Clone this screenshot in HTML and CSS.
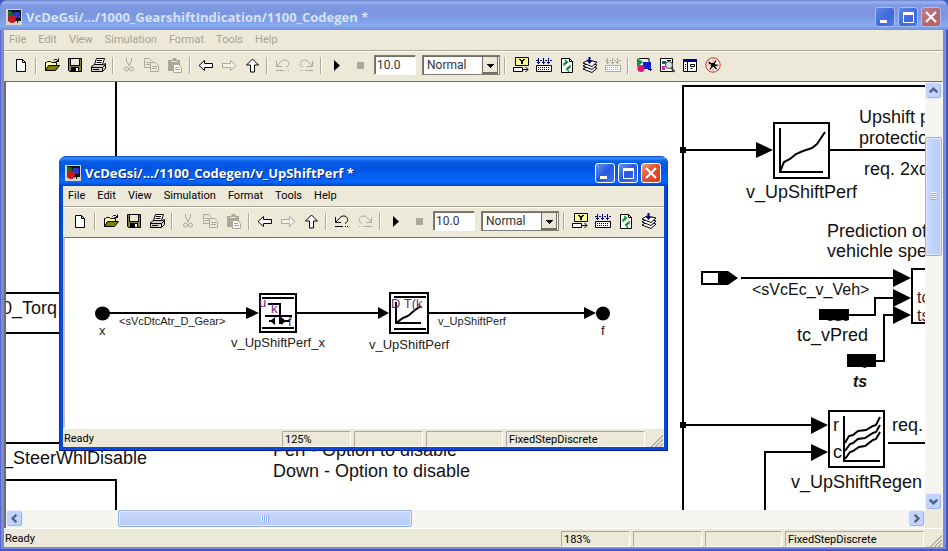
FILE: index.html
```html
<!DOCTYPE html>
<html lang="en">
<head>
<meta charset="utf-8">
<title>VcDeGsi/.../1000_GearshiftIndication/1100_Codegen *</title>
<link rel="stylesheet" href="styles.css">
</head>
<body>
<svg class="defs" aria-hidden="true">
  <defs>
    <symbol id="i-app" viewBox="0 0 16 16"><path fill="#d8d4c8" d="M0 0h16v16H0z"/><path fill="#111" d="M2 1h13v11H2z"/><path fill="#2434c8" d="M8 3h6v6H8z"/><path fill="#176a3c" d="M2 2h3l3 3-3 3H2z"/><circle cx="6" cy="10" r="4" fill="#c81824"/><path fill="#111" d="M12 9v2h2v1h-2v2h-1v-2H9v-1h2V9z"/></symbol>
    <symbol id="i-new" viewBox="0 0 16 16"><path d="M3.500 2.500h6l3 3v9h-9z" fill="#fff" stroke="#000"/><path d="M9.500 2.500v3h3" fill="none" stroke="#000"/></symbol>
    <symbol id="i-open" viewBox="0 0 16 16"><path d="M1.500 13.500v-8h1l1-1h3l1 1h5v3" fill="#ffffa0" stroke="#000"/><path d="M1.500 13.500l3-5h11l-4 5z" fill="#808000" stroke="#000"/><path d="M9.500 3.500l1-1h2l2 2M14.500 1.500v3h-3" fill="none" stroke="#000"/></symbol>
    <symbol id="i-save" viewBox="0 0 16 16"><path d="M1.500 1.500h13v13h-12l-1-1z" fill="#808040" stroke="#000"/><path d="M4 2h8v6H4z" fill="#ece9d8"/><path d="M3.500 2v6.500h9V2" fill="none" stroke="#000"/><path d="M4 10h8v5H4z"/><path d="M9 11h2v3H9z" fill="#fff"/></symbol>
    <symbol id="i-print" viewBox="0 0 16 16"><path d="M4.500 7.500l2-6h8l-2 6z" fill="#fff" stroke="#000"/><path d="M7 3.500h5M6.500 5.500h5" stroke="#000"/><path d="M1.500 9.500l3-2h9l2-1v5l-3 3h-11z" fill="#d4d0c8" stroke="#000"/><path d="M1.500 10.500h11v4M12.500 10.500l3-3M3 12.500h8" fill="none" stroke="#000"/><path d="M9 12h2v1H9z" fill="#ffe800"/></symbol>
    <symbol id="i-cut" viewBox="0 0 16 16"><g fill="none" stroke="#aca899"><path d="M5.500 1v3l3 5M10.500 1v3l-3 5"/><circle cx="5.500" cy="12" r="2"/><circle cx="10.500" cy="12" r="2"/></g></symbol>
    <symbol id="i-copy" viewBox="0 0 16 16"><g fill="#ece9d8" stroke="#aca899"><path d="M.5 1.500h5l3 3v6h-8z"/><path d="M2 5.500h4M2 7.500h4"/><path d="M6.500 5.500h5l3 3v6h-8z"/><path d="M8 9.500h5M8 11.500h5"/></g></symbol>
    <symbol id="i-paste" viewBox="0 0 16 16"><path d="M1 3h4l1-2h3l1 2h3v11H1z" fill="#aca899"/><path d="M4 4h6v1H4z" fill="#ece9d8"/><path d="M6.500 7.500h5l3 3v5h-8z" fill="#f8f6ee" stroke="#aca899"/><path d="M8 10.500h4M8 12.500h5" stroke="#aca899"/></symbol>
    <symbol id="i-left" viewBox="0 0 16 16"><path d="M1 8.500l5.500-5v3h8v4h-8v3z" fill="#fff" stroke="currentColor"/></symbol>
    <symbol id="i-right" viewBox="0 0 16 16"><path d="M15 8.500l-5.500-5v3h-8v4h8v3z" fill="#f4f2e8" stroke="#aca899"/></symbol>
    <symbol id="i-up" viewBox="0 0 16 16"><path d="M8.500 2l-6 6h4v7h4v-7h4z" fill="#fff" stroke="currentColor"/></symbol>
    <symbol id="i-undo" viewBox="0 0 16 16"><path d="M1.500 4v5.500h5.500M2 9l4-4.500c2-2 5-2 6.500-.5 2 2 1.500 5-1.500 6.500" fill="none" stroke="currentColor"/><path d="M1 13.500h8M11 13.500h1M13 13.500h1" stroke="currentColor"/></symbol>
    <symbol id="i-redo" viewBox="0 0 16 16"><path d="M14.500 4v5.500H9M14 9l-4-4.500c-2-2-5-2-6.500-.5-2 2-1.500 5 1.500 6.500" fill="none" stroke="currentColor"/><path d="M15 13.500H7M5 13.500H4M3 13.500H2" stroke="currentColor"/></symbol>
    <symbol id="i-play" viewBox="0 0 16 16"><path d="M5 3l6 5.500L5 14z"/></symbol>
    <symbol id="i-stop" viewBox="0 0 16 16"><path d="M5 5h7v7H5z" fill="#aca899"/></symbol>
    <symbol id="i-library" viewBox="0 0 16 16"><path d="M2.500.5h13v8h-13z" fill="#ffff90" stroke="#000"/><path d="M6 2h2v1h2V2h2v1h-1v1h-1v3H8V4H7V3H6z"/><path d="M.5 10.500h9v4h-9z" fill="#fff" stroke="#000"/><path d="M10 12.500h5M12.500 10l2.500 2.500-2.500 2.500" fill="none" stroke="#000"/></symbol>
    <symbol id="i-build" viewBox="0 0 16 16"><path d="M.5 8.500h15v6H.5z" fill="#fff" stroke="currentColor"/><path d="M2 10.500h12M2 12.500h12" stroke="currentColor" stroke-dasharray="1 1"/><path class="accent" d="M2.500 1v6M7.500 1v6M12.500 1v6M1 5.500h3M6 5.500h3M11 5.500h3M0 3.500h2M4 3.500h2M9 3.500h2M14 3.500h2" fill="none"/></symbol>
    <symbol id="i-refresh" viewBox="0 0 16 16"><path d="M2.500 1.500h8l3 3v11h-11z" fill="#fff" stroke="#000"/><path d="M10.500 1.500v3h3" fill="none" stroke="#000"/><path d="M5 9V6.500L7.500 5M6 3l2.500 2L6 7.500M11 8v2.500L8.500 12M10 9.500L7.500 12l2.500 2.500" fill="none" stroke="#08882c" stroke-width="1.300"/></symbol>
    <symbol id="i-stack" viewBox="0 0 16 16"><g fill="#fff" stroke="#000"><path d="M1 12l5-3 9 2-5 4.500z"/><path d="M1 9l5-3 9 2-5 4.500z"/><path d="M1 6l5-3 9 2-5 4.500z"/></g><path d="M7.500 0v4" stroke="#000080" stroke-width="2" fill="none"/><path d="M4.500 3.500h6l-3 3.500z" fill="#000080"/></symbol>
    <symbol id="i-browser" viewBox="0 0 16 16"><path d="M1 1l6 4-6 5z" fill="#089048"/><path d="M7 5h8v7H7z" fill="#1020d0"/><circle cx="5" cy="11.500" r="3.500" fill="#e01070"/><path d="M3 1.500h10V5M14.500 12v2M12 12.500h4" stroke="#000" fill="none"/></symbol>
    <symbol id="i-explorer" viewBox="0 0 16 16"><path d="M1.500 1.500h12v13h-12z" fill="#fff" stroke="#000"/><path d="M3 4h4v3H3z" fill="#0a6868"/><path d="M3 9h3v4H3z" fill="#e020c0"/><path d="M8 3.500h4" stroke="#000"/><circle cx="10" cy="8" r="3.500" fill="#d4e4e8" stroke="#444"/><path d="M12.500 11l3 4" stroke="#444" stroke-width="2"/></symbol>
    <symbol id="i-window" viewBox="0 0 16 16"><path d="M1.500 2.500h13v12h-13z" fill="#fff" stroke="#000"/><path d="M1 2h14v3H1z" fill="#000080"/><path d="M5.500 5v9M3 7.500h1M3 9.500h1M3 11.500h1M8.500 7.500h4v2h-4zM8.500 11.500h2" fill="none" stroke="#000"/></symbol>
    <symbol id="i-bug" viewBox="0 0 16 16"><circle cx="8" cy="8" r="7.200" fill="#fff4ec" stroke="#c83020"/><path d="M3 3l10 10M8 1v14M1 8h14" stroke="#e09888"/><circle cx="8" cy="8" r="2.200"/><path d="M3.500 5.500L7 7M11 3.500L9 7M12.500 8.500L9 8M5 12.500L7 9M11.500 12L9 9" stroke="#000" stroke-width="1.400"/></symbol>
    <symbol id="i-min" viewBox="0 0 18 18"><path d="M4 12h7v3H4z" fill="#fff"/></symbol>
    <symbol id="i-max" viewBox="0 0 18 18"><path d="M4 4h11v11H4zM5 7v7h9V7z" fill="#fff" fill-rule="evenodd"/></symbol>
    <symbol id="i-close" viewBox="0 0 18 18"><path d="M4 4l10 10M14 4L4 14" stroke="#fff" stroke-width="2.200"/></symbol>
    <symbol id="i-chevron" viewBox="0 0 16 16"><path d="M4 10l4-4 4 4" fill="none" stroke="#4d6185" stroke-width="2.600"/></symbol>
    <symbol id="i-grip" viewBox="0 0 14 14"><path d="M2 14L14 2M6 14l8-8M10 14l4-4" stroke="#aca899" stroke-width="1.600"/><path d="M1 14L14 1M5 14l9-9M9 14l5-5" stroke="#fff" stroke-width=".6"/></symbol>
  </defs>
</svg>

<main class="window inactive">
  <header class="titlebar">
    <svg class="app-icon"><use href="#i-app"/></svg>
    <h1>VcDeGsi/.../1000_GearshiftIndication/1100_Codegen *</h1>
    <div class="controls">
      <button aria-label="Minimize"><svg><use href="#i-min"/></svg></button>
      <button aria-label="Maximize"><svg><use href="#i-max"/></svg></button>
      <button class="close" aria-label="Close"><svg><use href="#i-close"/></svg></button>
    </div>
  </header>
  <nav class="menu">
    <button>File</button><button>Edit</button><button>View</button><button>Simulation</button><button>Format</button><button>Tools</button><button>Help</button>
  </nav>
  <div class="toolbar">
    <button aria-label="New"><svg><use href="#i-new"/></svg></button>
    <i class="sep"></i>
    <button aria-label="Open"><svg><use href="#i-open"/></svg></button>
    <button aria-label="Save"><svg><use href="#i-save"/></svg></button>
    <button aria-label="Print"><svg><use href="#i-print"/></svg></button>
    <i class="sep"></i>
    <button aria-label="Cut"><svg><use href="#i-cut"/></svg></button>
    <button aria-label="Copy"><svg><use href="#i-copy"/></svg></button>
    <button aria-label="Paste"><svg><use href="#i-paste"/></svg></button>
    <i class="sep"></i>
    <button aria-label="Back"><svg><use href="#i-left"/></svg></button>
    <button aria-label="Forward"><svg><use href="#i-right"/></svg></button>
    <button aria-label="Up"><svg><use href="#i-up"/></svg></button>
    <i class="sep"></i>
    <button class="off" aria-label="Undo"><svg><use href="#i-undo"/></svg></button>
    <button class="off" aria-label="Redo"><svg><use href="#i-redo"/></svg></button>
    <i class="sep"></i>
    <button aria-label="Start"><svg><use href="#i-play"/></svg></button>
    <button aria-label="Stop"><svg><use href="#i-stop"/></svg></button>
    <input class="stoptime" type="text" value="10.0" aria-label="Stop time">
    <select class="mode" aria-label="Mode"><option>Normal</option></select>
    <i class="sep"></i>
    <button aria-label="Library"><svg><use href="#i-library"/></svg></button>
    <button aria-label="Build"><svg><use href="#i-build"/></svg></button>
    <button aria-label="Refresh"><svg><use href="#i-refresh"/></svg></button>
    <button aria-label="Update"><svg><use href="#i-stack"/></svg></button>
    <button class="off" aria-label="Build subsystem"><svg><use href="#i-build"/></svg></button>
    <i class="sep"></i>
    <button aria-label="Library browser"><svg><use href="#i-browser"/></svg></button>
    <button aria-label="Model explorer"><svg><use href="#i-explorer"/></svg></button>
    <button aria-label="Model browser"><svg><use href="#i-window"/></svg></button>
    <button aria-label="Debug"><svg><use href="#i-bug"/></svg></button>
  </div>
  <div class="workspace scrolling">
    <svg class="canvas">
      <g transform="translate(-6 -82)">
        <g class="wire">
          <path d="M116 82v100M6 293h60M6 333h60M6 443h60M6 480h110v40"/>
          <path d="M1200 86H683v600M683 150h76M829 150h400M741 278h156M849 315h26v-17h20M876 361h8v-46h12M683 425h130M765 700V452h48M888 443h400"/>
          <path class="box" d="M774 123h55v55h-55zM829 411h55v56h-55zM912 269h200v54h-200z"/>
          <path d="M780 128v44h43M844 416v45h36"/>
          <path class="curve" d="M780 172l4-10 6-3 6-5 7-3 9-3 5-4 8-12"/>
          <path class="curve" d="M845 443l4-7 4-1 5-4 8-1 7-4 3-1 4-8M845 451l5-7 3-1 5-4 7-1 8-5 3-1 4-7M845 459l5-7 3-1 6-4 6-1 8-6 3-1 4-7"/>
          <path d="M719 272h-17v12h17"/>
        </g>
        <path d="M680 147h6v6h-6zM680 422h6v6h-6zM756 142l17 8-17 8zM893 269l18 9-18 9zM893 289l18 9-18 9zM893 306l18 9-18 9zM811 417l17 8-17 9zM811 444l17 8-17 9zM718 271h10l10 7-10 7h-10zM819 309h30v11l-3 1-3-1-5 1-4-1-4 1-3-1h-8zM847 354h29v13h-9l-2 1-3-1h-15z"/>
        <g class="label">
          <text x="859" y="123">Upshift performance</text>
          <text x="859" y="144">protection</text>
          <text x="864" y="175">req. 2xd</text>
          <text x="746" y="198">v_UpShiftPerf</text>
          <text x="827" y="237">Prediction of</text>
          <text x="827" y="257">vehichle speed</text>
          <text class="signal" x="752" y="295">&lt;sVcEc_v_Veh&gt;</text>
          <text class="port" x="917" y="303">tc</text>
          <text class="port" x="917" y="321">ts</text>
          <text x="797" y="341">tc_vPred</text>
          <text class="signal strong" x="853" y="387">ts</text>
          <text x="833" y="431">r</text>
          <text x="833" y="458">c</text>
          <text x="892" y="431">req.</text>
          <text x="791" y="488">v_UpShiftRegen</text>
          <text x="2" y="314">0_Torq</text>
          <text x="3" y="464">_SteerWhlDisable</text>
          <text x="273" y="456">Perf - Option to disable</text>
          <text x="273" y="477">Down - Option to disable</text>
        </g>
      </g>
    </svg>
    <div class="vscroll">
      <button aria-label="Scroll up"><svg><use href="#i-chevron"/></svg></button>
      <i class="before"></i><i class="thumb"></i><i class="after"></i>
      <button class="down" aria-label="Scroll down"><svg><use href="#i-chevron"/></svg></button>
    </div>
    <div class="hscroll">
      <button class="toleft" aria-label="Scroll left"><svg><use href="#i-chevron"/></svg></button>
      <i class="before"></i><i class="thumb"></i><i class="after"></i>
      <button class="toright" aria-label="Scroll right"><svg><use href="#i-chevron"/></svg></button>
    </div>
    <i class="corner"></i>
  </div>
  <footer class="status">
    <span class="state">Ready</span><span class="panel">183%</span><span class="panel"></span><span class="panel mid"></span><span class="panel wide">FixedStepDiscrete</span>
    <svg class="grip"><use href="#i-grip"/></svg>
  </footer>
</main>

<section class="window active">
  <header class="titlebar">
    <svg class="app-icon"><use href="#i-app"/></svg>
    <h2>VcDeGsi/.../1100_Codegen/v_UpShiftPerf *</h2>
    <div class="controls">
      <button aria-label="Minimize"><svg><use href="#i-min"/></svg></button>
      <button aria-label="Maximize"><svg><use href="#i-max"/></svg></button>
      <button class="close" aria-label="Close"><svg><use href="#i-close"/></svg></button>
    </div>
  </header>
  <nav class="menu">
    <button>File</button><button>Edit</button><button>View</button><button>Simulation</button><button>Format</button><button>Tools</button><button>Help</button>
  </nav>
  <div class="toolbar">
    <button aria-label="New"><svg><use href="#i-new"/></svg></button>
    <i class="sep"></i>
    <button aria-label="Open"><svg><use href="#i-open"/></svg></button>
    <button aria-label="Save"><svg><use href="#i-save"/></svg></button>
    <button aria-label="Print"><svg><use href="#i-print"/></svg></button>
    <i class="sep"></i>
    <button aria-label="Cut"><svg><use href="#i-cut"/></svg></button>
    <button aria-label="Copy"><svg><use href="#i-copy"/></svg></button>
    <button aria-label="Paste"><svg><use href="#i-paste"/></svg></button>
    <i class="sep"></i>
    <button aria-label="Back"><svg><use href="#i-left"/></svg></button>
    <button aria-label="Forward"><svg><use href="#i-right"/></svg></button>
    <button aria-label="Up"><svg><use href="#i-up"/></svg></button>
    <i class="sep"></i>
    <button aria-label="Undo"><svg><use href="#i-undo"/></svg></button>
    <button class="off" aria-label="Redo"><svg><use href="#i-redo"/></svg></button>
    <i class="sep"></i>
    <button aria-label="Start"><svg><use href="#i-play"/></svg></button>
    <button aria-label="Stop"><svg><use href="#i-stop"/></svg></button>
    <input class="stoptime" type="text" value="10.0" aria-label="Stop time">
    <select class="mode" aria-label="Mode"><option>Normal</option></select>
    <i class="sep"></i>
    <button aria-label="Library"><svg><use href="#i-library"/></svg></button>
    <button aria-label="Build"><svg><use href="#i-build"/></svg></button>
    <button aria-label="Refresh"><svg><use href="#i-refresh"/></svg></button>
    <button aria-label="Update"><svg><use href="#i-stack"/></svg></button>
  </div>
  <div class="workspace">
    <svg class="canvas">
      <g transform="translate(-65 -238)">
        <g class="wire">
          <path d="M102 313h146M297 313h83M429 313h157"/>
          <path class="box" d="M260 294h36v38h-36zM390 293h38v40h-38z"/>
          <path d="M262 298h32M262 328h32M268 304h12v20M265 316h27M269 321h6M282 321h8M394 297h32M394 329h32M396 302v21h25"/>
          <path class="curve" d="M396 323l7-5 5-2 7-6 6-4"/>
        </g>
        <ellipse cx="102.500" cy="313.500" rx="7.500" ry="7"/>
        <ellipse cx="603" cy="313.500" rx="7" ry="7"/>
        <path d="M246 307l13 6-13 6zM378 307l11 6-11 6zM584 307l12 6-12 6zM275 317l-5 4 5 4zM281 317l5 4-5 4z"/>
        <g class="label small">
          <text x="99" y="335">x</text>
          <text x="601" y="335">f</text>
          <text x="231" y="347">v_UpShiftPerf_x</text>
          <text x="369" y="349">v_UpShiftPerf</text>
          <text class="tiny" x="119" y="325">&lt;sVcDtcAtr_D_Gear&gt;</text>
          <text class="tiny" x="438" y="325">v_UpShiftPerf</text>
          <text class="mask" x="259" y="307">u</text>
          <text class="mask" x="271" y="313">k</text>
          <text class="mask" x="288" y="326">f</text>
          <text class="mask" x="391" y="308">D T(k</text>
        </g>
      </g>
    </svg>
  </div>
  <footer class="status">
    <span class="state">Ready</span><span class="panel">125%</span><span class="panel"></span><span class="panel mid"></span><span class="panel wide">FixedStepDiscrete</span>
    <svg class="grip"><use href="#i-grip"/></svg>
  </footer>
</section>
</body>
</html>
```
FILE: styles.css
```css
* { box-sizing: border-box; }

body {
  margin: 0;
  height: 100vh;
  overflow: hidden;
  background: #3c5cc0;
  font-family: Roboto, "Liberation Sans", sans-serif;
  font-size: 11px;
  color: #000;
}

button, input, select { font: inherit; color: inherit; margin: 0; padding: 0; }
button { border: 0; background: none; }
svg { display: block; flex: none; }
.defs { position: absolute; width: 0; height: 0; }

/* Window frame */
.window {
  display: flex;
  flex-direction: column;
  border-radius: 8px 8px 0 0;
  overflow: hidden;
  padding: 0 4px 4px;
}
.window > * { background: #ece9d8; }
.window.inactive {
  height: 100%;
  padding-right: 5px;
  background: #7b8ade;
  box-shadow: inset -2px -2px 0 #4656c0, inset 1px 0 0 #5b68c8;
}
.window.active {
  position: absolute;
  left: 59px;
  top: 156px;
  width: 609px;
  height: 295px;
  background: #0a48d8;
  box-shadow: inset -1px -1px 0 #001a90, inset 1px 0 0 #0a30b0;
}

.titlebar {
  display: flex;
  align-items: center;
  height: 30px;
  margin: 0 -4px;
  padding: 3px 7px 0 6px;
  flex: none;
}
.inactive .titlebar {
  margin-right: -5px;
  background: linear-gradient(#6a80d0 0, #9cb4f0 2px, #7f9ae2 5px, #7a94de 14px, #7f9fe8 20px, #86aaf0 26px, #7490dc 30px);
}
.active .titlebar {
  background: linear-gradient(#0840c0 0, #3c94ff 2px, #0a60ea 5px, #0054e0 12px, #0560f4 20px, #0668ff 26px, #0040c8 30px);
}
.titlebar h1, .titlebar h2 {
  flex: 1;
  margin: 0 0 0 4px;
  font: bold 13px/20px "Open Sans", sans-serif;
  white-space: nowrap;
}
.inactive h1 { color: #d6e2f8; }
.active h2 { color: #fff; text-shadow: 1px 1px 0 #0a2a80; }
.app-icon { width: 16px; height: 16px; }

.controls { display: flex; gap: 3px; }
.controls button {
  width: 20px;
  height: 20px;
  border: 1px solid #fff;
  border-radius: 3px;
  background: linear-gradient(135deg, #6a94f4, #2458e0 50%, #3c74f8);
}
.controls button.close { background: linear-gradient(135deg, #f0a080, #e05030 45%, #d04018); }
.controls svg { width: 18px; height: 18px; }
.inactive .controls button { border-color: #a8bcf0; background: linear-gradient(135deg, #5f86e4, #3c68dc 60%, #4c80ee); }
.inactive .controls button.close { background: linear-gradient(135deg, #c08090, #b46468 60%, #b86870); }

/* Menu and toolbar */
.menu {
  display: flex;
  gap: 12px;
  height: 20px;
  padding: 0 5px;
  flex: none;
}
.menu button { height: 19px; line-height: 19px; }
.inactive .menu { color: #a5a294; }

.toolbar {
  display: flex;
  align-items: center;
  height: 31px;
  padding: 0 5px 2px;
  border-top: 1px solid #aca899;
  box-shadow: inset 0 1px 0 #fff;
  flex: none;
}
.toolbar button {
  display: flex;
  justify-content: center;
  width: 23px;
  flex: none;
}
.toolbar button svg { width: 16px; height: 16px; }
.toolbar .off { color: #aca899; --accent: #aca899; }
.accent { stroke: var(--accent, #000080); }
.sep {
  width: 2px;
  height: 17px;
  margin: 0 3px;
  border-left: 1px solid #aca899;
  border-right: 1px solid #fff;
  flex: none;
}
.stoptime, .mode {
  height: 20px;
  border: 1px solid;
  border-color: #808078 #fff #fff #808078;
  border-radius: 0;
  background-color: #fff;
  box-shadow: inset 1px 1px 0 #716f64;
  color: #333;
  font-size: 12px;
  flex: none;
}
.stoptime { width: 42px; margin: 0 6px 0 3px; padding-left: 2px; }
.mode {
  width: 78px;
  margin-right: 1px;
  padding-left: 4px;
  appearance: none;
  border-color: #808078;
  background-image:
    linear-gradient(#000, #000), linear-gradient(#000, #000), linear-gradient(#000, #000), linear-gradient(#000, #000),
    linear-gradient(#ece9d8, #ece9d8), linear-gradient(#716f64, #716f64);
  background-repeat: no-repeat;
  background-size: 7px 1px, 5px 1px, 3px 1px, 1px 1px, 14px 15px, 16px 17px;
  background-position: right 5px top 8px, right 6px top 9px, right 7px top 10px, right 8px top 11px, right 2px top 1px, right 1px top 1px;
}

/* Drawing area */
.workspace {
  flex: 1;
  min-height: 0;
  display: grid;
  grid-template: minmax(0, 1fr) / minmax(0, 1fr);
  border-top: 1px solid #716f64;
  border-left: 2px solid #716f64;
}
.inactive .workspace { border-right: 1px solid #f8f6ee; }
.active .workspace { border-left-color: #c8c4b4; }
.workspace.scrolling { grid-template: minmax(0, 1fr) 18px / minmax(0, 1fr) 17px; }
.canvas { width: 100%; height: 100%; background: #fff; overflow: hidden; }
.wire path { fill: none; stroke: #000; stroke-width: 2; }
.label text { font-family: "Liberation Sans", Arial, sans-serif; font-size: 18px; fill: #111; }
.label .signal, .label .port { font-size: 16px; }
.label .port { fill: #4a2028; }
.label .strong { font-weight: bold; font-style: italic; }
.label.small text { font-size: 13px; fill: #222; }
.label.small .tiny { font-size: 11px; }
.label.small .mask { fill: #6a2a70; }

.vscroll, .hscroll { display: flex; background: #f6f5ef; }
.vscroll { flex-direction: column; }
.vscroll button, .hscroll button {
  width: 17px;
  height: 17px;
  border: 1px solid #e8effe;
  border-radius: 3px;
  background: #c3d3fc;
  box-shadow: inset -1px -1px 0 #9ab4ea;
  flex: none;
}
.vscroll svg, .hscroll svg { width: 15px; height: 15px; }
.down svg { transform: rotate(180deg); }
.toleft svg { transform: rotate(-90deg); }
.toright svg { transform: rotate(90deg); }
.thumb {
  display: flex;
  border: 1px solid #98b0e4;
  border-radius: 2px;
  box-shadow: inset 0 0 0 1px #e0eafe;
}
.thumb::after { content: ""; margin: auto; }
.vscroll .thumb { flex: 117; background: linear-gradient(90deg, #cbd9fd, #b8ccf8); }
.vscroll .thumb::after { width: 7px; height: 8px; background: repeating-linear-gradient(#eef4fe 0 1px, #8cb0f8 1px 2px); }
.vscroll .before { flex: 38; }
.vscroll .after { flex: 238; }
.hscroll .thumb { flex: 293; height: 17px; background: linear-gradient(#cbd9fd, #b8ccf8); }
.hscroll .thumb::after { width: 8px; height: 7px; background: repeating-linear-gradient(90deg, #eef4fe 0 1px, #8cb0f8 1px 2px); }
.hscroll .before { flex: 95; }
.hscroll .after { flex: 498; }
.corner { background: #ece9d8; }

/* Status bar */
.status {
  display: flex;
  align-items: center;
  gap: 3px;
  height: 19px;
  padding: 1px 0 0 1px;
  border-top: 1px solid #fff;
  line-height: 15px;
  flex: none;
}
.state { flex: 1; }
.panel {
  width: 69px;
  height: 16px;
  padding-left: 2px;
  border: 1px solid;
  border-color: #aca899 #fff #fff #aca899;
  white-space: nowrap;
  flex: none;
}
.mid { width: 77px; }
.wide { width: 139px; }
.grip { width: 14px; height: 14px; margin: 2px 1px 0 1px; }
```
